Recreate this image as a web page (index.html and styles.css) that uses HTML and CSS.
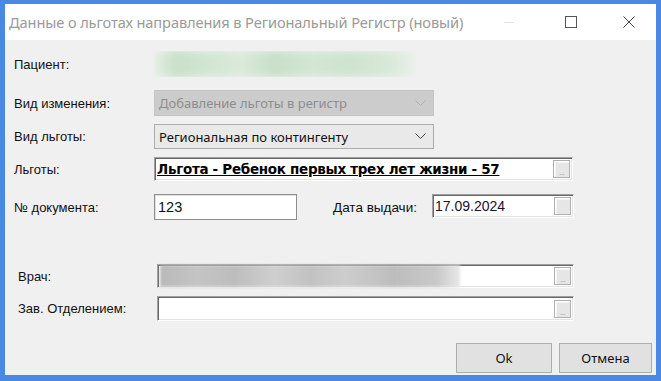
FILE: index.html
```html
<!DOCTYPE html>
<html>
  <head>
    <title>Данные о льготах направления</title>
    <meta name="viewport" content="width=device-width, initial-scale=1.0" />
    <link rel="stylesheet" href="styles.css">
  </head>
  <body>
    <div class="window">
      <div class="titlebar">
        <span class="title">Данные о льготах направления в Региональный Регистр (новый)</span>
        <div class="controls">
          <span class="ctl-min"></span>
          <span class="ctl-max"></span>
          <svg class="ctl-close" width="12" height="12" viewBox="0 0 12 12">
            <path d="M0.5 0.5 L11.5 11.5 M11.5 0.5 L0.5 11.5" stroke="#444" stroke-width="1" fill="none" />
          </svg>
        </div>
      </div>

      <div class="content">
        <div class="row row-patient">
          <label class="lbl">Пациент:</label>
          <div class="blur-box"><div class="blur-green"></div></div>
        </div>

        <div class="row row-combo1">
          <label class="lbl">Вид изменения:</label>
          <div class="combo combo-disabled">
            <span>Добавление льготы в регистр</span>
            <svg width="11" height="7" viewBox="0 0 11 7"><path d="M0.5 0.5 L5.5 5.5 L10.5 0.5" stroke="#b0b0b0" fill="none" /></svg>
          </div>
        </div>

        <div class="row row-combo2">
          <label class="lbl">Вид льготы:</label>
          <div class="combo">
            <span>Региональная по контингенту</span>
            <svg width="11" height="7" viewBox="0 0 11 7"><path d="M0.5 0.5 L5.5 5.5 L10.5 0.5" stroke="#444" fill="none" /></svg>
          </div>
        </div>

        <div class="row row-benefit">
          <label class="lbl">Льготы:</label>
          <div class="field field-wide">
            <span class="benefit-text">Льгота - Ребенок первых трех лет жизни - 57</span>
            <span class="dots-btn"><i>...</i></span>
          </div>
        </div>

        <div class="row row-doc">
          <label class="lbl">№ документа:</label>
          <div class="plain-input">123</div>
          <label class="lbl-date">Дата выдачи:</label>
          <div class="field field-date">
            <span class="date-text">17.09.2024</span>
            <span class="dots-btn"></span>
          </div>
        </div>

        <div class="group">
          <div class="row row-doctor">
            <label class="lbl lbl-group">Врач:</label>
            <div class="field field-group">
              <div class="blur-gray"></div>
              <span class="dots-btn"><i>...</i></span>
            </div>
          </div>

          <div class="row row-head">
            <label class="lbl lbl-group">Зав. Отделением:</label>
            <div class="field field-group">
              <span class="dots-btn"><i>...</i></span>
            </div>
          </div>
        </div>

        <div class="buttons">
          <button type="button">Ok</button>
          <button type="button">Отмена</button>
        </div>
      </div>
    </div>
  </body>
</html>
```

FILE: styles.css
```css
/* Windows-style dialog */
body {
  margin: 0;
  padding: 0;
  background-color: #4a88e6;
  font-family: "Liberation Sans", Arial, sans-serif;
}

.window {
  width: 651px;
  height: 371px;
  margin: 5px;
  margin-top: 4px;
  background-color: #f0f0f0;
  display: flex;
  flex-direction: column;
}

.titlebar {
  height: 36px;
  background-color: #fff;
  display: flex;
  align-items: center;
  justify-content: space-between;
  flex-shrink: 0;
}

.title {
  font-family: "Noto Sans", "Open Sans", sans-serif;
  font-size: 14.6px;
  color: #9a9a9a;
  padding-left: 4px;
  margin-top: -1px;
  letter-spacing: -0.1px;
}

.controls {
  display: flex;
  align-items: center;
  height: 100%;
}

.ctl-min {
  width: 10px;
  height: 1px;
  background-color: #e6e6e6;
  margin-right: 51px;
}

.ctl-max {
  width: 10px;
  height: 10px;
  border: 1px solid #555;
  margin-right: 46px;
}

.ctl-close {
  margin-right: 21px;
}

.content {
  flex: 1;
  display: flex;
  flex-direction: column;
  padding-left: 9px;
  font-size: 13px;
  color: #111;
}

.row {
  display: flex;
  align-items: center;
}

.lbl {
  width: 140px;
  flex-shrink: 0;
}

.row-patient {
  height: 26px;
  margin-top: 11px;
}

.blur-box {
  width: 262px;
  height: 26px;
  overflow: hidden;
  background-color: #eef3ee;
}

.blur-green {
  width: 100%;
  height: 100%;
  background: linear-gradient(90deg, #e6efe6 0%, #c9e0c9 8%, #d3e6d3 22%, #dceadc 33%, #c8dfc8 46%, #d4e6d4 60%, #cfe3cf 75%, #d9e9d9 90%, #eaf1ea 100%);
  filter: blur(3px);
}

.row-combo1 {
  height: 26px;
  margin-top: 13px;
}

.row-combo2 {
  height: 25px;
  margin-top: 8px;
}

.combo {
  width: 280px;
  height: 100%;
  box-sizing: border-box;
  border: 1px solid #acacac;
  background-color: #e9e9e9;
  display: flex;
  align-items: center;
  justify-content: space-between;
  padding: 0 7px 0 4px;
  font-family: "Noto Sans", "Open Sans", sans-serif;
  font-size: 13px;
  color: #111;
}

.combo-disabled {
  background-color: #cccccc;
  border-color: #c4c4c4;
  color: #8d8d8d;
}

.row-benefit {
  height: 24px;
  margin-top: 8px;
}

.field {
  height: 100%;
  box-sizing: border-box;
  background-color: #fff;
  border-top: 1px solid #a0a0a0;
  border-left: 1px solid #a0a0a0;
  border-right: 1px solid #fff;
  border-bottom: 1px solid #fff;
  box-shadow: inset 1px 1px 0 #696969, inset -1px -1px 0 #e3e3e3;
  display: flex;
  align-items: center;
  padding: 0 2px 0 2px;
}

.field-wide {
  width: 419px;
}

.benefit-text {
  font-family: "DejaVu Sans", sans-serif;
  font-weight: bold;
  font-size: 13.5px;
  text-decoration: underline;
  color: #000;
  letter-spacing: -0.3px;
  white-space: nowrap;
}

.dots-btn {
  width: 17px;
  height: 18px;
  margin-left: auto;
  box-sizing: border-box;
  border: 1px solid #b0b0b0;
  background-color: #e6e6e6;
  box-shadow: inset 1px 1px 0 #fff, inset 2px 2px 0 #f4f4f4;
  display: flex;
  align-items: flex-end;
  justify-content: center;
  flex-shrink: 0;
}

.dots-btn i {
  font-style: normal;
  font-size: 8px;
  line-height: 8px;
  color: #7c8fd0;
  letter-spacing: -0.5px;
}

.row-doc {
  height: 26px;
  margin-top: 13px;
}

.plain-input {
  width: 143px;
  height: 100%;
  box-sizing: border-box;
  border: 1px solid #8e8e8e;
  box-shadow: inset 1px 1px 0 #e0e0e0;
  background-color: #fff;
  display: flex;
  align-items: center;
  padding-left: 3px;
  font-size: 14.5px;
}

.lbl-date {
  margin-left: 36px;
  width: 99px;
  font-size: 13.5px;
}

.field-date {
  width: 142px;
  height: 24px;
  margin-top: -2px;
}

.date-text {
  font-size: 14px;
  color: #1a1030;
}

.group {
  margin-top: 44px;
  padding-left: 4px;
  display: flex;
  flex-direction: column;
}

.lbl-group {
  width: 139px;
}

.row-doctor {
  height: 24px;
}

.row-head {
  height: 25px;
  margin-top: 8px;
}

.field-group {
  width: 417px;
}

.blur-gray {
  width: 300px;
  height: 100%;
  background: linear-gradient(90deg, #b9b9b9 0%, #c4c4c4 12%, #bdbdbd 25%, #cfcfcf 38%, #c2c2c2 50%, #cdcdcd 62%, #bdbdbd 78%, #c8c8c8 92%, #e8e8e8 100%);
  filter: blur(1.5px);
}

.buttons {
  display: flex;
  justify-content: flex-end;
  gap: 7px;
  margin-top: 22px;
  padding-right: 4px;
}

button {
  width: 93px;
  height: 30px;
  background-color: #e1e1e1;
  border: 1px solid #adadad;
  font-family: "Noto Sans", "Open Sans", sans-serif;
  font-size: 13px;
  color: #111;
  padding: 0;
}

button:first-child {
  width: 96px;
}
```
